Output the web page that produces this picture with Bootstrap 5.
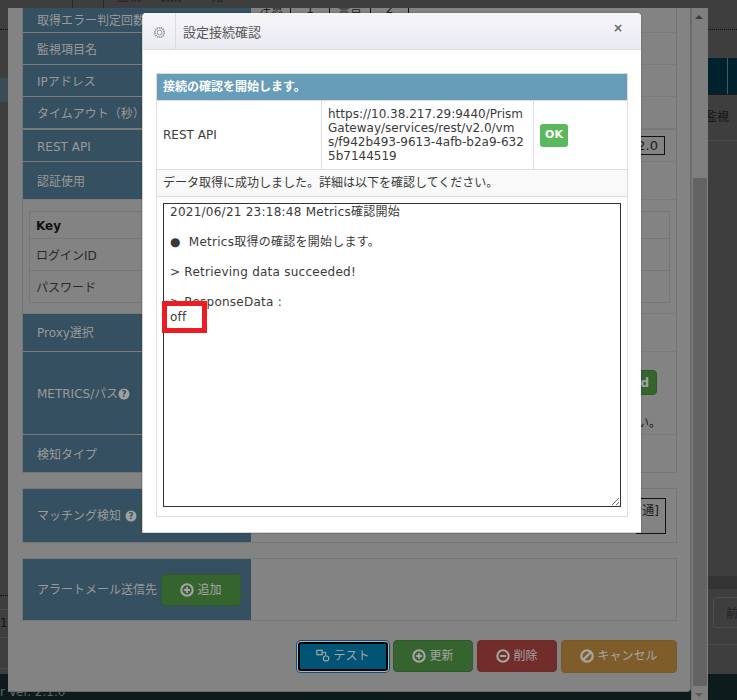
<!DOCTYPE html>
<html lang="ja">
<head>
<meta charset="utf-8">
<title>設定接続確認</title>
<link href="https://cdn.jsdelivr.net/npm/bootstrap@5.3.0/dist/css/bootstrap.min.css" rel="stylesheet">
<style>
html,body{height:700px;overflow:hidden}
body{background:#3e3e3e;font-family:"DejaVu Sans","Noto Sans CJK JP",sans-serif;font-size:12px;color:#222;position:relative}

/* dimmed page behind */
.pg-top{height:8px;overflow:hidden;color:#1f1f1f;line-height:0;position:relative;display:flex;word-spacing:13px}
.pg-top-a{width:72px;height:8px}
.pg-top-b{width:32px;height:8px;border-left:1px solid #2a2a2a;border-right:1px solid #2a2a2a;text-align:center}
.pg-top-c{padding-left:13px;margin-top:-3px}
.pg-head{position:absolute;left:708px;right:0;top:58px;height:37px;background:#00222e;border-bottom:1px solid #1b1b1b}
.pg-head::after{content:"";position:absolute;left:19px;top:0;bottom:0;width:1px;background:#4a5a60}
.pg-dots{position:absolute;height:1px;border-top:1px dotted #111}
.pg-word{position:absolute;color:#151515;font-size:12px;line-height:14px}
.pg-line{position:absolute;height:1px;background:#4b4b4b}
.pg-strip{position:absolute;left:708px;right:0;top:576px;height:13px;background:#333}
.pg-side{position:absolute;left:0;width:8px;top:78px;height:24px;background:#3a4c55}
.pg-next{position:absolute;left:713px;top:597px;width:40px;height:31px;border:1px solid #4d4d4d;border-radius:4px;padding:7px 12px;color:#222}
.pg-foot{position:absolute;left:0;right:0;top:674px;bottom:0;background:#0d1b1d;color:#5a6668;padding:11px 0 0 0;line-height:14px;font-size:12px}

/* outer dialog */
.win-outer{position:absolute;left:8px;top:8px;width:683px;height:684px;background:#838383;border-right:1px solid #6a6a6a;border-bottom:1px solid #6a6a6a;border-radius:0 0 4px 0;padding:0 13px 0 14px;overflow:hidden}
.win-scroll{position:absolute;left:691px;top:8px;width:17px;bottom:0;background:#7f7f7f;border-left:1px solid #6f6f6f}
.win-thumb{position:absolute;left:1px;right:1px;top:170px;bottom:14px;background:#636363}
.win-up,.win-down{position:absolute;left:3px;width:0;height:0;border-left:4px solid transparent;border-right:4px solid transparent}
.win-up{top:7px;border-bottom:4px solid #3c3c3c}
.win-down{bottom:3px;border-top:4px solid #5e5e5e}

.frm-group{border:1px solid #767676;border-top:0}
.frm-group.sep{border-top:1px solid #767676;margin-top:15px}
.frm-row{display:flex;border-bottom:1px solid #7a7a7a}
.frm-row:last-child{border-bottom:0}
.frm-label{width:228px;flex:none;background:#355060;color:#9a9a9a;padding:2px 0 0 14px;display:flex;align-items:center;font-size:12px}
.frm-label.flush{padding-top:0}
.frm-value{flex:1;min-width:0;display:flex;align-items:center;justify-content:flex-end;position:relative;color:#1c1c1c}
.h25{height:25px}.h32{height:32px}.h33{height:33px}.h37{height:37px}.h38{height:38px}.h83{height:83px}.h53{height:53px}.h61{height:61px}
.frm-panel{padding:11px 6px 10px;border-bottom:1px solid #7a7a7a}
.frm-panel table{width:100%;border-collapse:collapse;color:#2a2a2a}
.frm-panel td{border:1px solid #767676;padding:2px 6px 0;height:32px}
.frm-panel tr:first-child td{height:27px;font-weight:700;color:#111}
.h-icon{width:12px;height:12px;margin-left:4px;flex:none}
.cells-top{position:absolute;left:252px;top:8px;display:flex;height:6px;overflow:hidden;line-height:2px;color:#222;background:#838383}
.cells-top span{display:block;height:6px;border-right:1px solid #111;text-align:center}
.cell-box{border:1px solid #111;padding-right:6px;margin-right:11px;display:flex;align-items:center;justify-content:flex-end}
.box-ver{height:19px;width:40px;font-size:13px}
.box-kind{height:36px;width:30px;margin-right:10px;align-items:flex-start;padding-top:3px}
.btn-dim{color:#a5a5a5;font-size:12px;border-radius:4px;display:inline-flex;align-items:center;justify-content:center;gap:3px;padding:0;--bs-btn-font-size:12px}
.btn-g{background:#36642f;border:1px solid #2f5a2b}
.btn-r{background:#722d2b;border:1px solid #6d2a28}
.btn-o{background:#7f5d2a;border:1px solid #7a5926}
.btn-b{background:#005475;border:2px solid #000;box-shadow:0 0 0 1px #9fb6c4,0 0 0 2px #16506e;border-radius:3px}
.btn-dim svg{width:14px;height:14px}
.btn-add{width:80px;height:32px;margin-left:auto;margin-right:10px}
.btn-match{width:80px;height:31px;margin-left:4px}
.btn-kw{width:50px;height:25px;font-weight:700;justify-content:flex-end;padding-right:7px;margin:18px 19px 0 0}
.val-note{margin:20px 15px 0 0;line-height:16px;white-space:nowrap}
.frm-actions{display:flex;justify-content:flex-end;gap:4px;align-items:center;height:34px;margin-top:18px}
.w90{width:90px;height:29px;margin-right:1px}.w80{width:80px;height:32px}.w116{width:116px;height:33px}

/* inner dialog */
.dlg{position:absolute;left:142px;top:13px;width:499px;height:520px;background:#fff;border-radius:4px 4px 0 0;border:1px solid #d5d5d5;border-width:0 0 1px 1px;box-shadow:0 0 2px rgba(0,0,0,.3);overflow:hidden;color:#3a3a3a}
.dlg-head{display:flex;align-items:stretch;height:37px;background:linear-gradient(#f5f5f9,#ebebf3);border-bottom:1px solid #dcdcdc;position:relative}
.dlg-ico{width:33px;border-right:1px solid #dcdcdc;display:flex;align-items:center;justify-content:center;padding-top:2px}
.dlg-title{font-size:13px;padding:3px 0 0 7px;display:flex;align-items:center;color:#555}
.dlg-x{position:absolute;right:18px;top:6px;font-size:12px;font-weight:700;color:#666;line-height:18px}
.dlg-body{padding:23px 13px 0 13px}
.chk{width:472px;border:1px solid #ddd;height:444px;display:flex;flex-direction:column}
.chk-h{height:26px;background:#689db9;color:#fff;font-weight:700;padding:0 6px;display:flex;align-items:center}
.chk-r{display:flex;height:69px;border-top:1px solid #ddd}
.chk-a{width:165px;border-right:1px solid #ddd;padding:0 6px;display:flex;align-items:center}
.chk-b{width:212px;border-right:1px solid #ddd;padding:0 6px;display:flex;align-items:center;line-height:14px;white-space:nowrap}
.chk-c{flex:1;padding:0 6px;display:flex;align-items:center}
.chk-ok{background:#5cb85c;color:#fff;font-weight:700;font-size:11px;padding:0;width:28px;height:23px;border-radius:3px;display:flex;align-items:center;justify-content:center;margin-top:1px}
.chk-m{height:28px;border-top:1px solid #ddd;border-bottom:1px solid #ddd;background:#f9f9f9;padding:0 6px;display:flex;align-items:center}
.chk-t{flex:1;padding:6px;position:relative}
.chk-area{display:block;width:458px;height:304px;border:1px solid #333;border-radius:0;padding:1px 6px;font-size:12px;line-height:15px;letter-spacing:.25px;color:#3a3a3a;font-family:inherit;margin:0;outline:0}
.red-mark{position:absolute;left:5px;top:104px;width:45px;height:32px;border:5px solid #ec1c24;pointer-events:none}
</style>
</head>
<body>
<div class="pg-top"><div class="pg-top-a"></div><div class="pg-top-b"></div><div class="pg-top-c">監視 収集 一覧</div></div>
<div class="pg-side"></div>
<div class="pg-dots" style="left:0;top:29px;width:8px"></div>
<div class="pg-dots" style="left:708px;top:29px;right:0"></div>
<div class="pg-dots" style="left:0;top:595px;width:8px"></div>
<div class="pg-head"></div>
<div class="pg-word" style="left:705px;top:110px">監視</div>
<div class="pg-line" style="left:708px;right:0;top:140px"></div>
<div class="pg-line" style="left:0;width:8px;top:609px"></div>
<div class="pg-line" style="left:0;width:8px;top:637px"></div>
<div class="pg-line" style="left:0;width:8px;top:668px"></div>
<div class="pg-word" style="left:0;top:616px">1</div>
<div class="pg-strip"></div>
<div class="pg-next">前</div>
<div class="pg-line" style="left:708px;right:0;top:644px"></div>
<div class="pg-foot">r Ver. 2.1.0</div>

<div class="win-outer">
  <div class="frm-group">
    <div class="frm-row h25"><div class="frm-label">取得エラー判定回数</div><div class="frm-value"></div></div>
    <div class="frm-row h32"><div class="frm-label">監視項目名</div><div class="frm-value"></div></div>
    <div class="frm-row h32"><div class="frm-label">IPアドレス</div><div class="frm-value"></div></div>
    <div class="frm-row h32"><div class="frm-label">タイムアウト（秒）</div><div class="frm-value"></div></div>
    <div class="frm-row h33" style="border-top:1px solid #767676"><div class="frm-label">REST API</div><div class="frm-value"><span class="cell-box box-ver">2.0</span></div></div>
    <div class="frm-row h38"><div class="frm-label">認証使用</div><div class="frm-value"></div></div>
    <div class="frm-panel">
      <table>
        <tr><td>Key</td><td></td></tr>
        <tr><td>ログインID</td><td></td></tr>
        <tr><td>パスワード</td><td></td></tr>
      </table>
    </div>
    <div class="frm-row h38"><div class="frm-label flush">Proxy選択</div><div class="frm-value"></div></div>
    <div class="frm-row h83"><div class="frm-label">METRICS/パス<svg class="h-icon ms-0" viewBox="0 0 12 12"><circle cx="6" cy="6" r="5.5" fill="#a0a0a0"/><text x="6" y="9" text-anchor="middle" font-size="8.5" font-weight="700" fill="#355060">?</text></svg></div>
      <div class="frm-value flex-column justify-content-start align-items-end"><button class="btn btn-g btn-dim btn-kw" type="button">Keyword</button><span class="val-note">ください。</span></div></div>
    <div class="frm-row h37"><div class="frm-label">検知タイプ</div><div class="frm-value"></div></div>
  </div>
  <div class="frm-group sep">
    <div class="frm-row h53"><div class="frm-label flush">マッチング検知<svg class="h-icon" viewBox="0 0 12 12"><circle cx="6" cy="6" r="5.5" fill="#a0a0a0"/><text x="6" y="9" text-anchor="middle" font-size="8.5" font-weight="700" fill="#355060">?</text></svg><button class="btn btn-g btn-dim btn-match" type="button">追加</button></div>
      <div class="frm-value"><span class="cell-box box-kind">通]</span></div></div>
  </div>
  <div class="frm-group sep">
    <div class="frm-row h61"><div class="frm-label flush"><span>アラートメール送信先</span><button class="btn btn-g btn-dim btn-add" type="button"><svg viewBox="0 0 16 16"><circle cx="8" cy="8" r="6.5" fill="none" stroke="#a5a5a5" stroke-width="2.4"/><path d="M8 4.5v7M4.5 8h7" stroke="#a5a5a5" stroke-width="2.2"/></svg>追加</button></div><div class="frm-value"></div></div>
  </div>
  <div class="frm-actions">
    <button class="btn btn-b btn-dim w90" type="button"><svg viewBox="0 0 16 16"><rect x="1" y="1.5" width="6" height="5" fill="none" stroke="#a5a5a5" stroke-width="1.4"/><rect x="8.5" y="8" width="6" height="5.5" rx="2.5" fill="none" stroke="#a5a5a5" stroke-width="1.4"/><path d="M7 4h4v4" fill="none" stroke="#a5a5a5" stroke-width="1.2"/></svg>テスト</button>
    <button class="btn btn-g btn-dim w80" type="button"><svg viewBox="0 0 16 16"><circle cx="8" cy="8" r="6.5" fill="none" stroke="#a5a5a5" stroke-width="2.4"/><path d="M8 4.5v7M4.5 8h7" stroke="#a5a5a5" stroke-width="2.2"/></svg>更新</button>
    <button class="btn btn-r btn-dim w80" type="button"><svg viewBox="0 0 16 16"><circle cx="8" cy="8" r="6.5" fill="none" stroke="#a5a5a5" stroke-width="2.4"/><path d="M4.5 8h7" stroke="#a5a5a5" stroke-width="2.4"/></svg>削除</button>
    <button class="btn btn-o btn-dim w116" type="button"><svg viewBox="0 0 16 16"><circle cx="8" cy="8" r="6.5" fill="none" stroke="#a5a5a5" stroke-width="2.6"/><path d="M3.8 12.2l8.4-8.4" stroke="#a5a5a5" stroke-width="2.6"/></svg>キャンセル</button>
  </div>
</div>
<div class="cells-top"><span style="width:39px">注意</span><span style="width:39px">1</span><span style="width:41px">警告</span><span style="width:38px">2</span></div>
<div class="win-scroll"><div class="win-up"></div><div class="win-thumb"></div><div class="win-down"></div></div>

<div class="dlg">
  <div class="dlg-head">
    <div class="dlg-ico"><svg width="13" height="13" viewBox="0 0 14 14"><circle cx="7" cy="7" r="2.6" fill="none" stroke="#999" stroke-width="1"/><circle cx="7" cy="7" r="5" fill="none" stroke="#999" stroke-width="2" stroke-dasharray="1.4 .8"/></svg></div>
    <div class="dlg-title">設定接続確認</div>
    <div class="dlg-x">×</div>
  </div>
  <div class="dlg-body">
    <div class="chk">
      <div class="chk-h">接続の確認を開始します。</div>
      <div class="chk-r">
        <div class="chk-a">REST API</div>
        <div class="chk-b"><div>https://10.38.217.29:9440/Prism<br>Gateway/services/rest/v2.0/vm<br>s/f942b493-9613-4afb-b2a9-632<br>5b7144519</div></div>
        <div class="chk-c"><span class="chk-ok">OK</span></div>
      </div>
      <div class="chk-m">データ取得に成功しました。詳細は以下を確認してください。</div>
      <div class="chk-t">
        <textarea class="chk-area form-control" readonly>2021/06/21 23:18:48 Metrics確認開始

●  Metrics取得の確認を開始します。

&gt; Retrieving data succeeded!

&gt; ResponseData :
off</textarea>
        <div class="red-mark"></div>
      </div>
    </div>
  </div>
</div>
</body>
</html>
